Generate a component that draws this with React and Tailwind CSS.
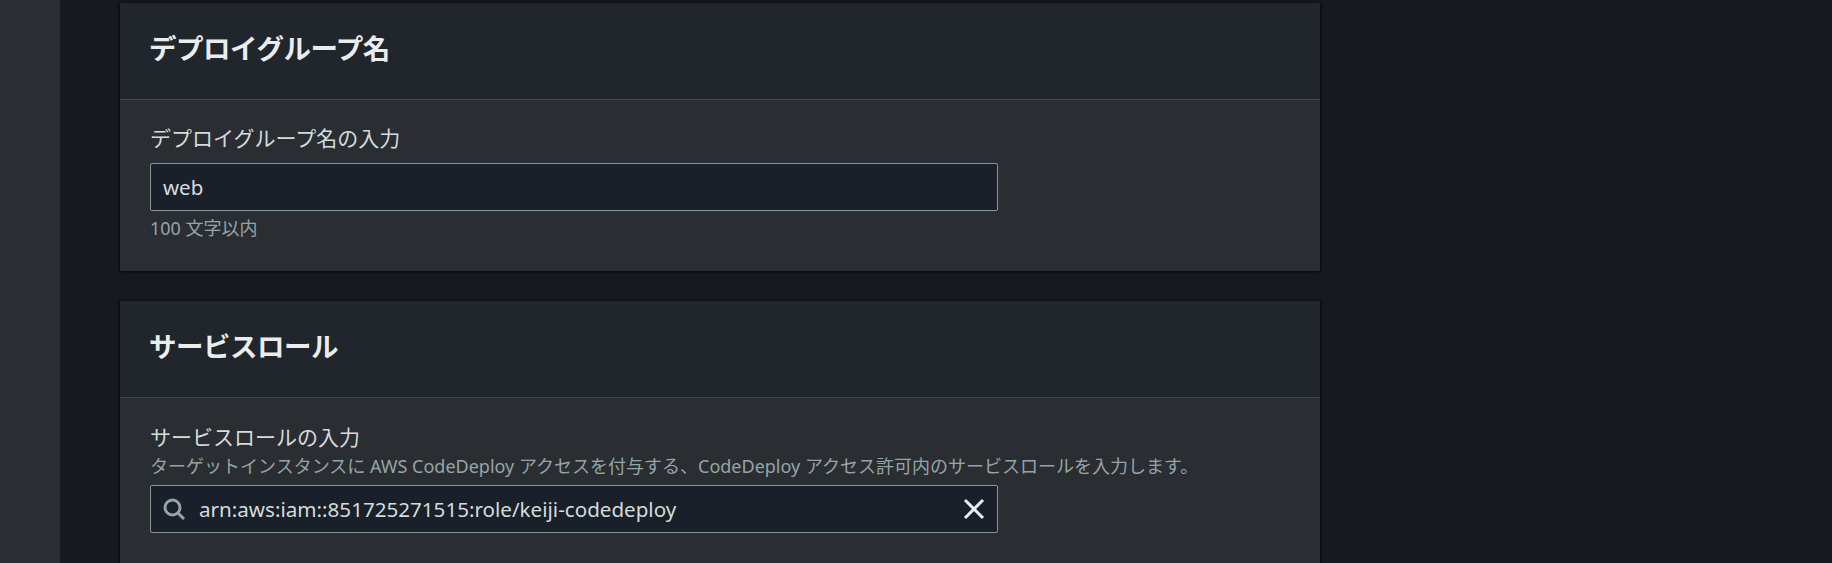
import React from 'react';

const font = "font-['Noto_Sans','Noto_Sans_CJK_JP',sans-serif]";

function Card({ title, children, className = '' }) {
  return (
    <section className={`bg-[#2a2e33] shadow-[0_1px_3px_rgba(0,0,0,0.6),1px_0_2px_rgba(0,0,0,0.35),-1px_0_2px_rgba(0,0,0,0.35)] ${className}`}>
      <div className="h-[97px] border-b border-[#414750] bg-[#21252c] pt-[28px] pr-[30px] pl-[29px]">
        <h2 className="text-[27.5px] leading-[36px] font-bold tracking-[-0.5px] text-[#eaeded]">{title}</h2>
      </div>
      {children}
    </section>
  );
}

export default function App() {
  return (
    <div className={`flex h-[563px] overflow-hidden bg-[#16191f] ${font}`}>
      {/* Side nav edge */}
      <div className="w-[60px] shrink-0 bg-[#2a2e33]" />

      <main className="w-[1260px] shrink-0 pt-[3px] pl-[60px]">
        {/* Deployment group name */}
        <Card title="デプロイグループ名" className="h-[268px]">
          <div className="px-[30px] pt-[24px]">
            <label className="block text-[21px] leading-[28px] text-[#d5dbdb]">デプロイグループ名の入力</label>
            <div className="mt-[11px] flex h-[48px] w-[848px] items-center rounded-[2px] border border-[#879596] bg-[#1a2029] px-[12px] text-[20.5px] text-[#d5dbdb]">
              web
            </div>
            <p className="mt-[5px] text-[18px] leading-[24px] text-[#95a5a6]">100 文字以内</p>
          </div>
        </Card>

        {/* Service role */}
        <Card title="サービスロール" className="mt-[30px] h-[300px]">
          <div className="px-[30px] pt-[25px]">
            <label className="block text-[21px] leading-[28px] text-[#d5dbdb]">サービスロールの入力</label>
            <p className="mt-[3px] text-[18px] leading-[24px] text-[#95a5a6]">
              ターゲットインスタンスに AWS CodeDeploy アクセスを付与する、CodeDeploy アクセス許可内のサービスロールを入力します。
            </p>
            <div className="mt-[7px] flex h-[48px] w-[848px] items-center rounded-[2px] border border-[#879596] bg-[#1a2029] pr-[11px] pl-[12px] text-[20.6px] text-[#d5dbdb]">
              <svg width="24" height="24" viewBox="0 0 24 24" fill="none" stroke="#95a5a6" strokeWidth="3" className="-ml-[1px] shrink-0">
                <circle cx="10.5" cy="10.5" r="7.5" />
                <path d="M16 16l6 6" />
              </svg>
              <span className="ml-[13px] flex-1">arn:aws:iam::851725271515:role/keiji-codedeploy</span>
              <svg width="24" height="24" viewBox="0 0 24 24" fill="none" stroke="#eaeded" strokeWidth="3" className="shrink-0">
                <path d="M3 3l18 18M21 3L3 21" />
              </svg>
            </div>
          </div>
        </Card>
      </main>
    </div>
  );
}
